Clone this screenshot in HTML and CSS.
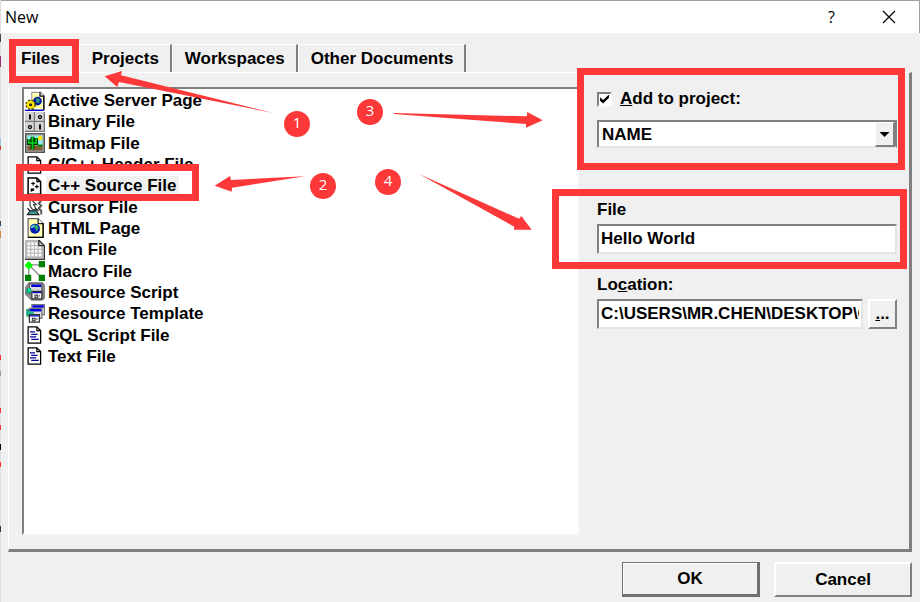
FILE: index.html
```html
<!DOCTYPE html>
<html lang="en">
<head>
    <meta charset="UTF-8">
    <meta name="viewport" content="width=device-width, initial-scale=1.0">
    <title>New</title>
    <link rel="stylesheet" href="styles.css">
</head>
<body>
    <div class="dialog">
        <header class="title-bar">
            <h1>New</h1>
            <button class="title-button" aria-label="Help">?</button>
            <button class="title-button" aria-label="Close">
                <svg width="14" height="14" viewBox="0 0 14 14"><path d="M1 1l12 12M13 1L1 13" stroke="#000" stroke-width="1.2"/></svg>
            </button>
        </header>

        <nav class="tabs" role="tablist">
            <button class="tab active" role="tab" aria-selected="true">Files</button>
            <button class="tab" role="tab">Projects</button>
            <button class="tab" role="tab">Workspaces</button>
            <button class="tab" role="tab">Other Documents</button>
        </nav>

        <main class="panel">
            <ul class="file-list">
                <li>
                    <svg class="icon" viewBox="0 0 16 16">
                        <path d="M5.500 1h7l3 3v11h-10z" fill="#fff" stroke="#999"/>
                        <path d="M6 2h5v3h3v9H6z" fill="#ffffa0"/>
                        <path d="M12 1v3h3v11" fill="none" stroke="#000"/>
                        <circle cx="10" cy="8" r="3.500" fill="#0018a8"/>
                        <path d="M9 5l3 2-1 3-2-1z" fill="#30a070"/>
                        <circle cx="4.500" cy="11" r="3.500" fill="#ffe600" stroke="#5c5000" stroke-width="1.500" stroke-dasharray="1.800 1"/>
                        <circle cx="4.500" cy="11" r="3" fill="#ffe600"/>
                        <circle cx="4.500" cy="11" r="1.200" fill="#222"/>
                        <path d="M0 15.500h15" stroke="#0000d0"/>
                    </svg>
                    <span>Active Server Page</span>
                </li>
                <li>
                    <svg class="icon" viewBox="0 0 16 16">
                        <path d="M0 0h16v16H0z" fill="#777"/>
                        <path d="M0 0h7v7H0zM8 0h7v7H8zM0 8h7v7H0zM8 8h7v7H8z" fill="#d4d4d4"/>
                        <path d="M4 2v4M12 10v4" stroke="#000" stroke-width="1.500"/>
                        <circle cx="12" cy="4" r="1.200" fill="none" stroke="#000"/>
                        <circle cx="4" cy="12" r="1.200" fill="none" stroke="#000"/>
                    </svg>
                    <span>Binary File</span>
                </li>
                <li>
                    <svg class="icon" viewBox="0 0 16 16">
                        <path d="M.5.5h15v15H.5z" fill="#a0a0a0" stroke="#555"/>
                        <path d="M2 2h12v8H2z" fill="#8ff0f4"/>
                        <path d="M2 10h12v4H2z" fill="#806030"/>
                        <path d="M6 13V3M3 5v3h3M9 4v4H6" fill="none" stroke="#003800" stroke-width="3"/>
                        <path d="M6 13V3M3 5v3h3M9 4v4H6" fill="none" stroke="#00d020" stroke-width="1.300"/>
                        <circle cx="12" cy="4" r="1.800" fill="#ffe600"/>
                        <path d="M10 10h4" stroke="#008000" stroke-width="1.500"/>
                    </svg>
                    <span>Bitmap File</span>
                </li>
                <li>
                    <svg class="icon" viewBox="0 0 16 16">
                        <path d="M2.500 1.500h7l3 3v10h-10z" fill="#fff" stroke="#000"/>
                        <path d="M9.500 1.500v3h3" fill="none" stroke="#000"/>
                        <path d="M5 7v5M5 9.500h3V12" fill="none" stroke="#000"/>
                    </svg>
                    <span>C/C++ Header File</span>
                </li>
                <li class="selected">
                    <svg class="icon" viewBox="0 0 16 16">
                        <path d="M2.500 1.500h7l3 3v10h-10z" fill="#fff" stroke="#000" stroke-width="1.200"/>
                        <path d="M9.500 1.500v3h3" fill="none" stroke="#000"/>
                        <path d="M5 6h3M6.500 4.500v3M8 8.500h3M9.500 7v3M7.500 10.500H5v2M5 11.500h2" fill="none" stroke="#000" stroke-width=".900"/>
                    </svg>
                    <span>C++ Source File</span>
                </li>
                <li>
                    <svg class="icon" viewBox="0 0 16 16">
                        <path d="M4 1l5 5H7l2 4H6L4 7z" fill="#fff" stroke="#444"/>
                        <path d="M2 14l2-3h5l2 3z" fill="#40a0a0" stroke="#222"/>
                        <path d="M13 3l-2 2 2 2-2 2 2 2v3" fill="none" stroke="#555" stroke-width="1.500"/>
                        <path d="M2 9l2 2M8 9l3 2" stroke="#222"/>
                    </svg>
                    <span>Cursor File</span>
                </li>
                <li>
                    <svg class="icon" viewBox="0 0 16 16">
                        <path d="M2.500.500h8l4 4v11h-12z" fill="#ffffb0" stroke="#666"/>
                        <path d="M10.500.500v4h4" fill="#fff" stroke="#222"/>
                        <path d="M14.500 4v11.500h-12" fill="none" stroke="#000"/>
                        <circle cx="8" cy="8.500" r="4" fill="#0018b8"/>
                        <path d="M7 5l3 1 1 2-2 3-1-3-3-1z" fill="#30a870"/>
                        <path d="M5 8l2-2" stroke="#80d8ff"/>
                    </svg>
                    <span>HTML Page</span>
                </li>
                <li>
                    <svg class="icon" viewBox="0 0 16 16">
                        <path d="M0 0h11l4 4v11H0z" fill="#b8b8b8"/>
                        <path d="M2 2h8v3h3v8H2z" fill="#fff"/>
                        <path d="M4.500 2v11M7.500 2v11M10.500 5v8M2 4.500h11M2 7.500h11M2 10.500h11" stroke="#bbb"/>
                        <path d="M11 0l4.500 4.500V15.500H0M11 0v4.500h4.500" fill="none" stroke="#333"/>
                    </svg>
                    <span>Icon File</span>
                </li>
                <li>
                    <svg class="icon" viewBox="0 0 16 16">
                        <path d="M3 3h10M3 3v10M3 3l10 10" fill="none" stroke="#888"/>
                        <path d="M3 0l3.500 3.500L3 7-.5 3.500z" fill="#00ff00"/>
                        <path d="M11 0h5v5h-5zM0 11h5v5H0zM11 11h5v5h-5z" fill="#008000"/>
                    </svg>
                    <span>Macro File</span>
                </li>
                <li>
                    <svg class="icon" viewBox="0 0 16 16">
                        <path d="M3 0h11l2 2v11l-2 2H5l-5-5V4z" fill="#888"/>
                        <path d="M3.500 1.500h10v8h-10z" fill="#d8d8d8" stroke="#666"/>
                        <path d="M5 3h8" stroke="#0000e0" stroke-width="2"/>
                        <path d="M1 5h4v4H1z" fill="#159878"/>
                        <path d="M3 5v2h2" stroke="#00ffa0" fill="none"/>
                        <path d="M5.500 7.500h8v6h-8z" fill="#fff" stroke="#333"/>
                        <path d="M6 8.500h7" stroke="#0000c0"/>
                        <path d="M8 10.500h2v2H8zM11 11h1" fill="none" stroke="#444"/>
                    </svg>
                    <span>Resource Script</span>
                </li>
                <li>
                    <svg class="icon" viewBox="0 0 16 16">
                        <path d="M5.500.500h10v8h-10z" fill="#ddd" stroke="#777"/>
                        <path d="M6 2h9" stroke="#0000e0" stroke-width="2"/>
                        <path d="M1 4h5v6H1z" fill="#159878"/>
                        <path d="M3.500 3.500h10v8h-10z" fill="#ddd" stroke="#777"/>
                        <path d="M4 5h9" stroke="#0000e0" stroke-width="2"/>
                        <path d="M2 6h5v3H2z" fill="#18b890"/>
                        <path d="M3.500 8.500h8v6h-8z" fill="#fff" stroke="#333"/>
                        <path d="M4 9.500h7" stroke="#0000c0"/>
                        <path d="M6 11.500h2v2H6zM9 12h1" fill="none" stroke="#444"/>
                    </svg>
                    <span>Resource Template</span>
                </li>
                <li>
                    <svg class="icon" viewBox="0 0 16 16">
                        <path d="M2.500 1.500h7l3 3v10h-10z" fill="#fff" stroke="#000"/>
                        <path d="M9.500 1.500v3h3" fill="none" stroke="#000"/>
                        <path d="M4 5.500h4M5 7.500h5M4 9.500h5M5 11.500h6" stroke="#000090"/>
                    </svg>
                    <span>SQL Script File</span>
                </li>
                <li>
                    <svg class="icon" viewBox="0 0 16 16">
                        <path d="M2.500 1.500h7l3 3v10h-10z" fill="#fff" stroke="#000"/>
                        <path d="M9.500 1.500v3h3" fill="none" stroke="#000"/>
                        <path d="M4 5.500h4M5 7.500h5M4 9.500h5M5 11.500h6" stroke="#000090"/>
                    </svg>
                    <span>Text File</span>
                </li>
            </ul>

            <form class="settings">
                <div class="check-row">
                    <input type="checkbox" id="add-to-project" checked>
                    <label for="add-to-project"><u>A</u>dd to project:</label>
                </div>
                <div class="select-wrap">
                    <select aria-label="Project">
                        <option>NAME</option>
                    </select>
                    <span class="select-arrow"></span>
                </div>

                <div class="field file-field">
                    <label for="file-name">File</label>
                    <input type="text" id="file-name" value="Hello World">
                </div>

                <div class="field">
                    <label for="location">Lo<u>c</u>ation:</label>
                    <div class="location-row">
                        <input type="text" id="location" value="C:\USERS\MR.CHEN\DESKTOP\C++">
                        <button type="button" class="browse" aria-label="Browse"><u>.</u>..</button>
                    </div>
                </div>
            </form>
        </main>

        <footer class="actions">
            <button class="action default">OK</button>
            <button class="action">Cancel</button>
        </footer>
    </div>

    <!-- Step annotations over the dialog -->
    <svg class="notes" width="920" height="602" viewBox="0 0 920 602">
        <g class="note-box">
            <rect x="12.500" y="42.500" width="63" height="37"/>
            <rect x="19.500" y="167.500" width="176" height="30"/>
            <rect x="580.500" y="71.500" width="321" height="95"/>
            <rect x="555.500" y="192.500" width="348" height="73"/>
        </g>
        <g class="note-arrow">
            <path d="M104.700 76.300L122 71l-1 4.300L273 113 119 82l-1.700 5z"/>
            <path d="M214.700 185.700L230 176l1 4 74-3.700-73 11.400-.300 4z"/>
            <path d="M394 113l132.700 3.300.600-4.300 15.400 8.300-16.700 7.400V124L394 114z"/>
            <path d="M419 174l100 44.700 2.300-2.700 10.400 13.700H514l.300-3z"/>
            <circle cx="297" cy="124" r="13"/>
            <circle cx="323" cy="186" r="13"/>
            <circle cx="370" cy="112" r="13"/>
            <circle cx="388" cy="182" r="13"/>
        </g>
        <g class="note-number">
            <text x="297" y="128">1</text>
            <text x="323" y="190">2</text>
            <text x="370" y="116">3</text>
            <text x="388" y="186">4</text>
        </g>
    </svg>
</body>
</html>
```

FILE: styles.css
```css
* {
    box-sizing: border-box;
}
body {
    margin: 0;
    min-height: 100vh;
    display: flex;
    position: relative;
    font-family: "Liberation Sans", Arial, sans-serif;
    font-size: 17px;
    font-weight: bold;
    color: #000;
    /* Edge of the window behind the dialog */
    background: linear-gradient(#ddd 0 34px, #445 34px 42px, #ddd 42px 56px, #a03070 56px 67px, #ddd 67px 138px, #9cd 138px 146px, #d33 146px 150px, #ddd 150px 221px, #345 221px 226px, #ddd 226px 231px, #c84 231px 238px, #ddd 238px 355px, #f33 355px 360px, #ddd 360px 371px, #999 371px 376px, #ddd 376px 408px, #f33 408px 413px, #ddd 413px 425px, #f33 425px 430px, #ddd 430px 444px, #000 444px 450px, #ddd 450px 462px, #f33 462px 467px, #ddd 467px 526px, #333 526px 532px, #ddd 532px);
}
button, input, select {
    font: inherit;
    color: inherit;
    border-radius: 0;
}
.dialog {
    flex: 1;
    display: flex;
    flex-direction: column;
    margin-left: 1px;
    border-top: 1px solid #a0a0a0;
    background-color: #f0f0f0;
}
.title-bar {
    display: flex;
    align-items: center;
    height: 32px;
    padding: 0 2px 0 4px;
    background-color: #fff;
    border-right: 1px solid #a0a0a0;
}
.title-bar h1 {
    flex: 1;
    margin: 0;
    font-family: "Open Sans", sans-serif;
    font-size: 16px;
    font-weight: normal;
}
.title-button {
    display: flex;
    align-items: center;
    justify-content: center;
    width: 57px;
    height: 32px;
    padding: 0;
    border: none;
    background: none;
    font-family: "Open Sans", sans-serif;
    font-size: 16px;
    font-weight: normal;
}
.tabs {
    display: flex;
    margin-top: 11px;
    padding-left: 8px;
}
.tab {
    height: 28px;
    padding: 1px 11px 0 12px;
    border: none;
    border-top: 1px solid #fff;
    border-left: 1px solid #fff;
    border-right: 2px solid #808080;
    border-top-left-radius: 3px;
    background-color: #f0f0f0;
}
.tab.active {
    padding: 1px 17px 0 11px;
}
.panel {
    flex: 1;
    display: grid;
    grid-template-columns: 1fr 300px;
    gap: 18px;
    margin: 0 8px 0 7px;
    padding: 14px 12px 14px 13px;
    border: 1px solid #fff;
    border-right: 3px solid #808080;
    border-bottom: 3px solid #808080;
}
.file-list {
    display: grid;
    grid-auto-rows: 1fr;
    margin: 0;
    padding: 1px 0 166px;
    list-style: none;
    background-color: #fff;
    border: 2px solid #808080;
    border-right-color: #fafafa;
    border-bottom-color: #fafafa;
}
.file-list li {
    display: flex;
    align-items: center;
    gap: 1px;
    padding-left: 1px;
}
.file-list span {
    padding: 0 2px;
    line-height: 19px;
}
.file-list .selected span {
    background-color: #f0f0f0;
}
.icon {
    width: 20px;
    height: 20px;
}
.settings {
    display: flex;
    flex-direction: column;
    min-width: 0;
}
.check-row {
    display: flex;
    align-items: center;
    gap: 8px;
    height: 24px;
    margin-bottom: 9px;
}
.check-row input {
    appearance: none;
    width: 15px;
    height: 15px;
    margin: 0;
    background-color: #fff;
    border: 2px solid #808080;
    border-right-color: #fafafa;
    border-bottom-color: #fafafa;
}
.check-row input:checked::after {
    content: "";
    display: block;
    width: 9px;
    height: 9px;
    margin: 1px;
    background-color: #000;
    clip-path: polygon(0 30%, 35% 60%, 100% 0, 100% 35%, 35% 100%, 0 70%);
}
.select-wrap {
    position: relative;
}
.select-wrap select {
    appearance: none;
    display: block;
    width: 100%;
    height: 28px;
    padding: 1px 28px 0 3px;
    background-color: #fff;
    border: 2px solid #808080;
    border-bottom-color: #e4e4e4;
}
.select-arrow {
    position: absolute;
    top: 2px;
    right: 2px;
    width: 20px;
    height: 25px;
    background-color: #f0f0f0;
    border: 1px solid #fff;
    border-right: 2px solid #808080;
    border-bottom: 2px solid #808080;
    pointer-events: none;
}
.select-arrow::after {
    content: "";
    display: block;
    margin: 9px auto 0;
    width: 10px;
    height: 5px;
    background-color: #000;
    clip-path: polygon(0 0, 100% 0, 50% 100%);
}
.field {
    display: flex;
    flex-direction: column;
    gap: 3px;
    margin-top: 20px;
}
.file-field {
    margin-top: 51px;
}
.field label {
    line-height: 22px;
}
.field input {
    width: 100%;
    min-width: 0;
    height: 30px;
    padding: 0 2px;
    background-color: #fff;
    border: 2px solid #808080;
    border-right-color: #e4e4e4;
    border-bottom-color: #e4e4e4;
}
.location-row {
    display: flex;
    gap: 5px;
}
.browse, .action {
    padding: 0;
    background-color: #f0f0f0;
    border: 2px solid #fff;
    border-right-color: #808080;
    border-bottom-color: #808080;
}
.browse {
    flex: none;
    width: 29px;
    height: 30px;
}
.actions {
    display: flex;
    justify-content: flex-end;
    gap: 14px;
    padding: 10px 8px 5px;
}
.action {
    width: 138px;
    height: 35px;
}
.action.default {
    border: 1px solid #707070;
    border-right-width: 3px;
    border-bottom-width: 3px;
    box-shadow: inset 1px 1px #fff;
}
.notes {
    position: absolute;
    top: 0;
    left: 0;
    pointer-events: none;
}
.note-box {
    fill: none;
    stroke: #fc3838;
    stroke-width: 7px;
}
.note-arrow {
    fill: #fc3838;
}
.note-number {
    fill: #fff;
    font-family: "Open Sans", sans-serif;
    font-size: 15px;
    font-weight: normal;
    text-anchor: middle;
}
```
